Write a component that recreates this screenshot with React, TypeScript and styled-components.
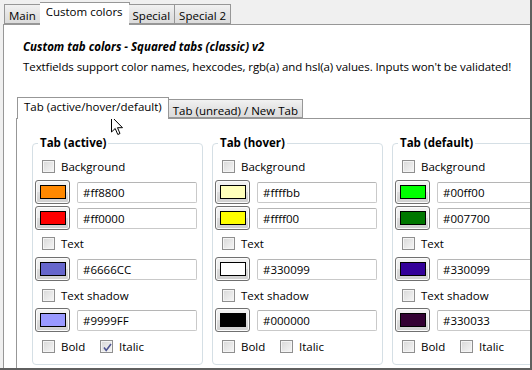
import React from 'react';
import styled, { createGlobalStyle } from 'styled-components';

const Global = createGlobalStyle`
  body {
    margin: 0;
    background: #f0f0f0;
    font-family: "Open Sans", "Noto Sans", sans-serif;
    font-size: 11px;
    color: #000;
  }
`;

type Group = {
  title: string;
  bg: [string, string];
  bgSwatch: [string, string];
  text: string;
  textSwatch: string;
  shadow: string;
  shadowSwatch: string;
  italic?: boolean;
};

const groups: Group[] = [
  {
    title: 'Tab (active)',
    bg: ['#ff8800', '#ff0000'],
    bgSwatch: ['#ff8800', '#ff0000'],
    text: '#6666CC',
    textSwatch: '#6666cc',
    shadow: '#9999FF',
    shadowSwatch: '#9999ff',
    italic: true,
  },
  {
    title: 'Tab (hover)',
    bg: ['#ffffbb', '#ffff00'],
    bgSwatch: ['#ffffbb', '#ffff00'],
    text: '#330099',
    textSwatch: '#ffffff',
    shadow: '#000000',
    shadowSwatch: '#000000',
  },
  {
    title: 'Tab (default)',
    bg: ['#00ff00', '#007700'],
    bgSwatch: ['#00ff00', '#007700'],
    text: '#330099',
    textSwatch: '#330099',
    shadow: '#330033',
    shadowSwatch: '#330033',
  },
];

const Window = styled.div`
  position: relative;
  width: 532px;
  height: 370px;
  box-sizing: border-box;
  padding: 2px 0 0 3px;
  border-right: 2px solid #5f5f5f;
  border-bottom: 2px solid #5f5f5f;
  overflow: hidden;
  display: flex;
  flex-direction: column;
`;

const TabStrip = styled.div<{ $inner?: boolean }>`
  display: flex;
  align-items: flex-end;
  height: ${p => (p.$inner ? 21 : 22)}px;
  padding-left: 1px;
  position: relative;
  z-index: 1;
`;

const Tab = styled.div<{ $active?: boolean; $inner?: boolean }>`
  box-sizing: border-box;
  height: ${p => (p.$active ? (p.$inner ? 22 : 23) : p.$inner ? 19 : 20)}px;
  margin-bottom: ${p => (p.$active ? -1 : 0)}px;
  padding: ${p => (p.$active ? '1px 6px 0' : '3px 4px 0')};
  margin-left: ${p => (p.$active && !p.$inner ? -1 : 0)}px;
  margin-right: ${p => (p.$active && !p.$inner ? -1 : 0)}px;
  border: 1px solid #979797;
  border-bottom: ${p => (p.$active ? 'none' : '1px solid #979797')};
  background: ${p => (p.$active ? '#fff' : 'linear-gradient(#f2f2f2, #e4e4e4 50%, #dcdcdc)')};
  white-space: nowrap;
  line-height: 16px;
  font-size: 11.5px;
  & + & {
    border-left: ${p => (p.$active ? '1px solid #979797' : 'none')};
  }
`;

const Panel = styled.div`
  flex: 1;
  background: #fff;
  border-top: 1px solid #979797;
  border-left: 1px solid #979797;
  padding: 12px 0 0 12px;
  overflow: hidden;
`;

const Heading = styled.div`
  margin-left: 7px;
  line-height: 20px;
  font-weight: 700;
  font-style: italic;
  font-size: 11.5px;
`;

const Description = styled.div`
  margin-left: 7px;
  line-height: 20px;
  font-size: 11.5px;
  letter-spacing: -0.08px;
`;

const Inner = styled.div`
  margin-top: 20px;
`;

const InnerPanel = styled.div`
  width: 560px;
  height: 300px;
  border-top: 1px solid #979797;
  border-left: 1px solid #979797;
  padding: 24px 0 0 15px;
  display: flex;
  gap: 9px;
`;

const GroupBox = styled.div`
  position: relative;
  flex-shrink: 0;
  box-sizing: border-box;
  width: 171px;
  height: 222px;
  border: 1px solid #d5dfe5;
  border-radius: 4px;
  padding: 11px 5px 0 2px;
  display: flex;
  flex-direction: column;
`;

const Legend = styled.div`
  position: absolute;
  top: -10px;
  left: 5px;
  padding: 0 2px;
  background: #fff;
  font-weight: 700;
  font-size: 11.5px;
  line-height: 18px;
`;

const CheckRow = styled.div<{ $gap?: number }>`
  display: flex;
  align-items: center;
  height: 22px;
  margin-top: ${p => p.$gap ?? 0}px;
  padding-left: 7px;
  font-size: 11.5px;
`;

const CheckItem = styled.label<{ $width?: number }>`
  display: flex;
  align-items: center;
  gap: 6px;
  width: ${p => (p.$width ? `${p.$width}px` : 'auto')};
`;

const Box = styled.span`
  position: relative;
  box-sizing: border-box;
  width: 13px;
  height: 13px;
  border: 1px solid #8f8f8f;
  background: linear-gradient(135deg, #d8d8d8, #f6f6f6);
  box-shadow: inset 0 0 0 1px #f4f4f4;
  svg {
    position: absolute;
    left: 0;
    top: 0;
  }
`;

const ColorRow = styled.div<{ $gap: number }>`
  display: flex;
  align-items: center;
  gap: 7px;
  height: 24px;
  margin-top: ${p => p.$gap}px;
`;

const ColorButton = styled.div`
  box-sizing: border-box;
  width: 35px;
  height: 24px;
  border: 1px solid #707070;
  border-radius: 3px;
  background: linear-gradient(#f3f3f3, #ebebeb 48%, #dddddd 52%, #cfcfcf);
  box-shadow: inset 0 0 0 1px #fbfbfb;
  display: flex;
  align-items: center;
  justify-content: center;
`;

const Swatch = styled.span<{ $color: string }>`
  box-sizing: border-box;
  width: 26px;
  height: 14px;
  border: 1px solid #000;
  background: ${p => p.$color};
`;

const Field = styled.div`
  box-sizing: border-box;
  width: 120px;
  height: 21px;
  border: 1px solid #c9c9c9;
  border-top-color: #b5b5b5;
  border-radius: 2px;
  padding-left: 5px;
  line-height: 19px;
  font-size: 11.5px;
`;

const Cursor = styled.svg`
  position: absolute;
  left: 111px;
  top: 116px;
`;

function Check({ label, checked, width }: { label: string; checked?: boolean; width?: number }) {
  return (
    <CheckItem $width={width}>
      <Box>
        {checked && (
          <svg width="13" height="13" viewBox="0 0 13 13">
            <path d="M3 6.5 L5.2 9.5 L10 3" fill="none" stroke="#4f5592" strokeWidth="1.6" />
          </svg>
        )}
      </Box>
      {label}
    </CheckItem>
  );
}

function Color({ swatch, value, gap }: { swatch: string; value: string; gap: number }) {
  return (
    <ColorRow $gap={gap}>
      <ColorButton>
        <Swatch $color={swatch} />
      </ColorButton>
      <Field>{value}</Field>
    </ColorRow>
  );
}

function TabGroup({ g }: { g: Group }) {
  return (
    <GroupBox>
      <Legend>{g.title}</Legend>
      <CheckRow>
        <Check label="Background" />
      </CheckRow>
      <Color swatch={g.bgSwatch[0]} value={g.bg[0]} gap={3} />
      <Color swatch={g.bgSwatch[1]} value={g.bg[1]} gap={2} />
      <CheckRow $gap={2}>
        <Check label="Text" />
      </CheckRow>
      <Color swatch={g.textSwatch} value={g.text} gap={3} />
      <CheckRow $gap={3}>
        <Check label="Text shadow" />
      </CheckRow>
      <Color swatch={g.shadowSwatch} value={g.shadow} gap={2} />
      <CheckRow $gap={3}>
        <Check label="Bold" width={58} />
        <Check label="Italic" checked={g.italic} />
      </CheckRow>
    </GroupBox>
  );
}

export default function App() {
  return (
    <Window>
      <Global />
      <TabStrip>
        <Tab>Main</Tab>
        <Tab $active>Custom colors</Tab>
        <Tab>Special</Tab>
        <Tab>Special 2</Tab>
      </TabStrip>
      <Panel>
        <Heading>Custom tab colors - Squared tabs (classic) v2</Heading>
        <Description>
          Textfields support color names, hexcodes, rgb(a) and hsl(a) values. Inputs won't be validated!
        </Description>
        <Inner>
          <TabStrip $inner>
            <Tab $active $inner>Tab (active/hover/default)</Tab>
            <Tab $inner>Tab (unread) / New Tab</Tab>
          </TabStrip>
          <InnerPanel>
            {groups.map(g => (
              <TabGroup key={g.title} g={g} />
            ))}
          </InnerPanel>
        </Inner>
      </Panel>
      <Cursor width="13" height="20" viewBox="0 0 13 20">
        <path d="M0.5 0.5 L0.5 16 L4.2 12.5 L6.8 18.5 L9 17.5 L6.5 11.7 L11.5 11.7 Z" fill="#fff" stroke="#000" strokeWidth="1" />
      </Cursor>
    </Window>
  );
}
